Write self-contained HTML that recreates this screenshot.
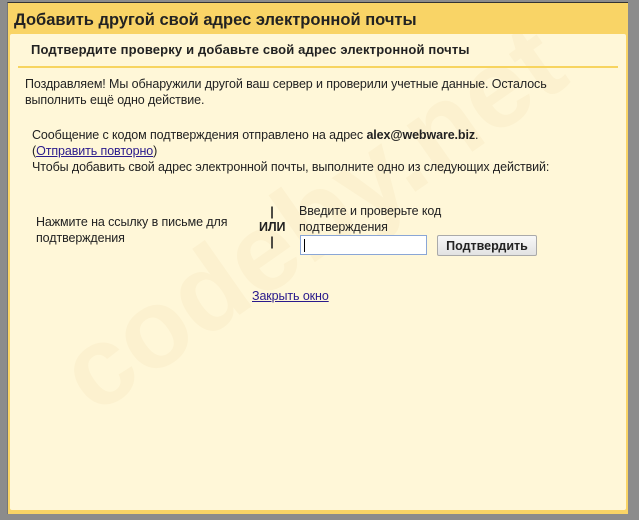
<!DOCTYPE html>
<html><head><meta charset="utf-8"><style>
body{margin:0;width:639px;height:520px;background:#8c8c8c;position:relative;overflow:hidden;font-family:"Liberation Sans",Arial,sans-serif;color:#222}
.frame{position:absolute;left:7px;top:2px;width:621px;height:512px;background:#f9d466;border-top:1px solid #333;border-left:1px solid #777;box-sizing:border-box}
.h{position:absolute;left:6px;top:8px;font-size:16.5px;font-weight:bold;color:#222;letter-spacing:0}
.panel{position:absolute;left:10px;top:34px;width:616px;height:476px;background:#fff7d8;border-radius:2px;overflow:hidden}
.sub{position:absolute;left:21px;top:8px;font-size:13px;font-weight:bold;letter-spacing:0.15px}
.line{position:absolute;left:8px;top:32px;width:600px;height:2px;background:#f7d45f}
.t{position:absolute;font-size:12.5px;line-height:16px;color:#222;letter-spacing:-0.1px}
a{color:#2a1a8c}
.inp{position:absolute;left:290px;top:201px;width:127px;height:20px;border:1px solid #8aa6d6;background:#fff;box-sizing:border-box}
.inp:after{content:"";position:absolute;left:3px;top:3px;width:1px;height:13px;background:#000}
.btn{position:absolute;left:427px;top:201px;width:100px;height:21px;border:1px solid #aaa;border-radius:2px;background:linear-gradient(#f8f8f8,#e2e2e2);font-size:12.5px;font-weight:bold;text-align:center;line-height:20px;box-sizing:border-box}
.wm{position:absolute;font-size:112px;font-weight:bold;color:#fcf1cf;transform:rotate(-35deg);transform-origin:left bottom;white-space:nowrap;line-height:1}
</style></head><body>
<div class="frame">
<div class="h">Добавить другой свой адрес электронной почты</div>
</div>
<div class="panel">
<div class="wm" style="left:95px;top:285px">codeby.net</div>
<div class="sub">Подтвердите проверку и добавьте свой адрес электронной почты</div>
<div class="line"></div>
<div class="t" style="left:15px;top:42px">Поздравляем! Мы обнаружили другой ваш сервер и проверили учетные данные. Осталось<br>выполнить ещё одно действие.</div>
<div class="t" style="left:22px;top:93px">Сообщение с кодом подтверждения отправлено на адрес <b>alex@webware.biz</b>.<br>(<a href="#">Отправить повторно</a>)<br>Чтобы добавить свой адрес электронной почты, выполните одно из следующих действий:</div>
<div class="t" style="left:26px;top:180px">Нажмите на ссылку в письме для<br>подтверждения</div>
<div class="t" style="left:249px;top:171px;text-align:center;font-weight:bold;line-height:15px;width:26px">|<br>ИЛИ<br>|</div>
<div class="t" style="left:289px;top:169px">Введите и проверьте код<br>подтверждения</div>
<div class="inp"></div>
<div class="btn">Подтвердить</div>
<div class="t" style="left:242px;top:254px"><a href="#">Закрыть окно</a></div>
</div>
</body></html>
